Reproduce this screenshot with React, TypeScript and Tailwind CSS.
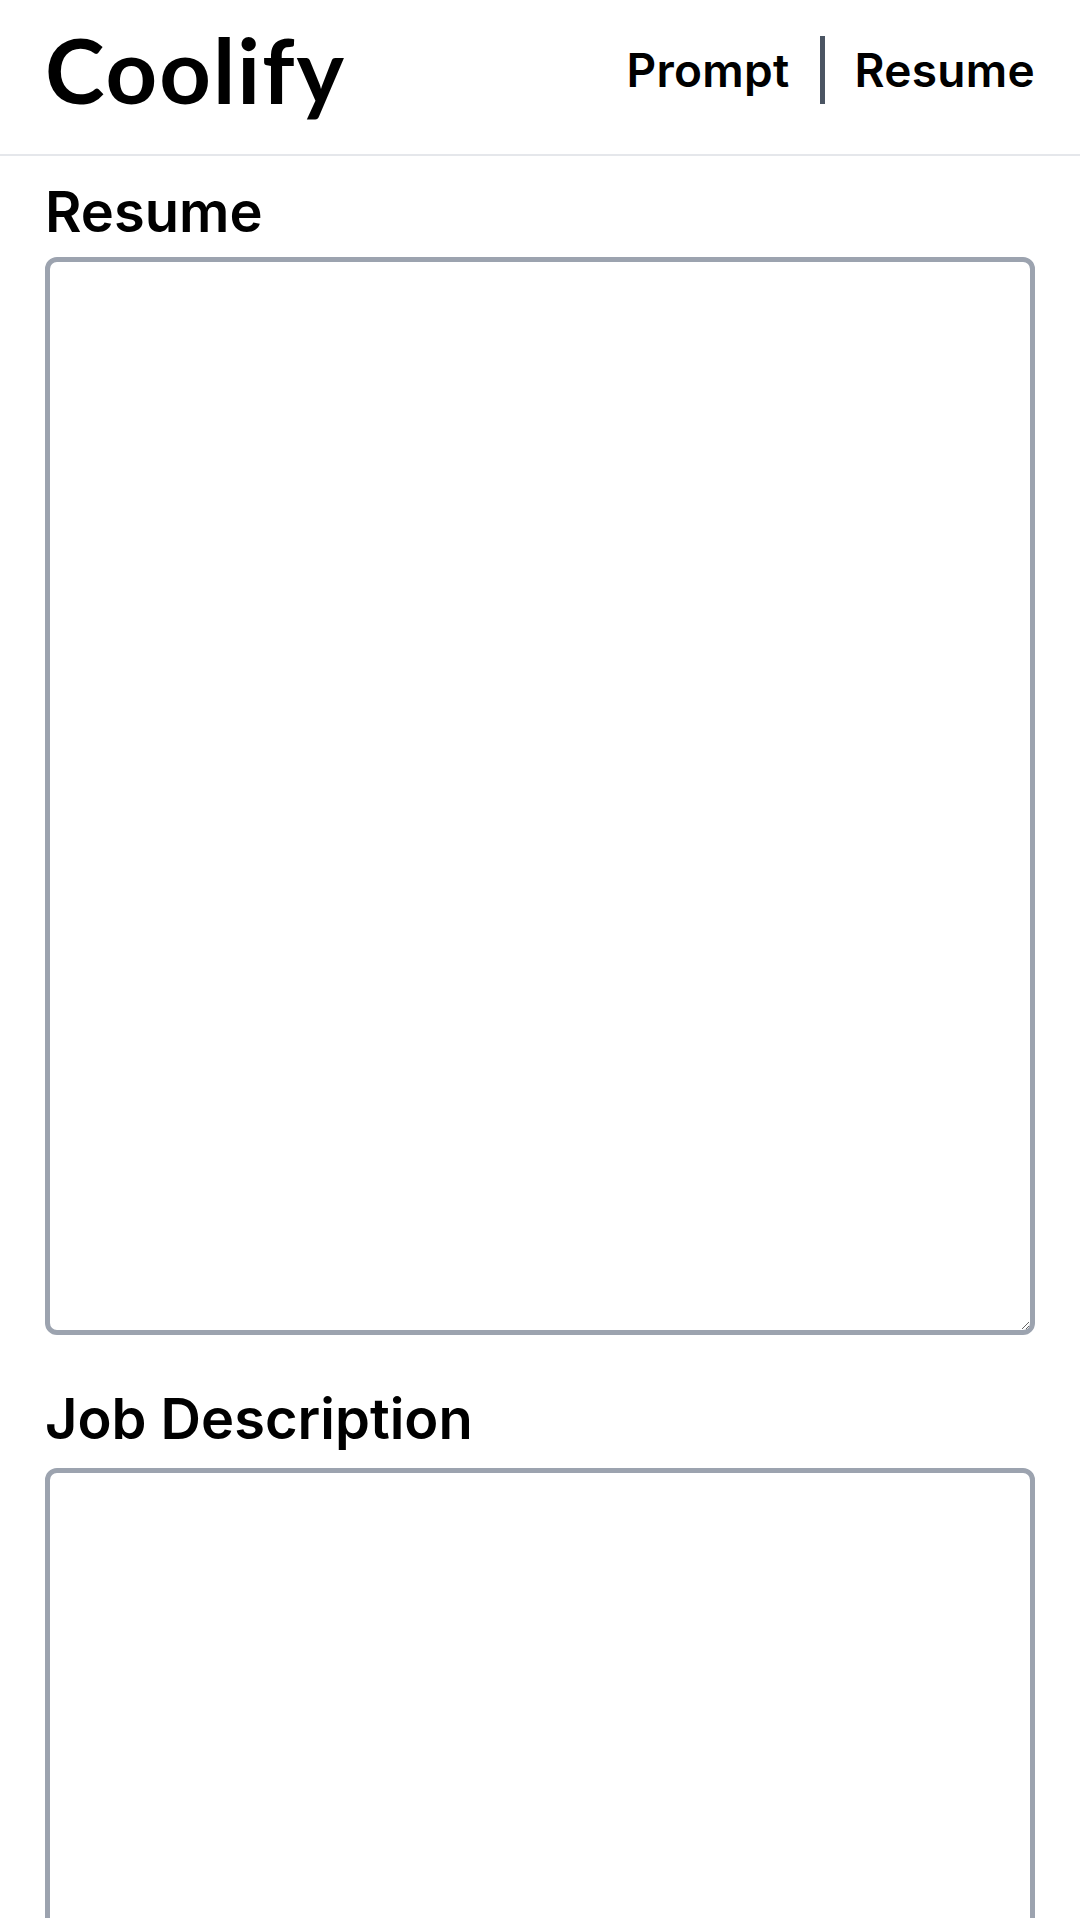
export default function App() {
  return (
    <div className="min-h-screen bg-white text-black font-['Inter',sans-serif]">
      {/* Top bar */}
      <header className="flex h-[156px] items-center justify-between border-b-2 border-[#e5e7eb] px-[45px] pb-[14px]">
        <h1 className="font-['Lato',sans-serif] text-[90px] font-bold leading-none tracking-[2px] -mt-[2px]">
          Coolify
        </h1>
        <nav className="flex items-center gap-[30px] text-[46px] font-semibold leading-none tracking-[0.3px]">
          <a href="#" className="text-black">Prompt</a>
          <span className="h-[68px] w-[5px] bg-[#4b5563]" />
          <a href="#" className="text-black">Resume</a>
        </nav>
      </header>

      <main className="flex flex-col px-[45px]">
        <label htmlFor="resume" className="mt-[24px] mb-[12px] text-[56px] font-semibold leading-[65px]">
          Resume
        </label>
        <textarea
          id="resume"
          className="h-[1078px] w-full rounded-[12px] border-[5px] border-[#9ca3af] bg-white p-4 text-[40px] outline-none"
        />

        <label htmlFor="job" className="mt-[52px] mb-[16px] text-[56px] font-semibold leading-[65px]">
          Job Description
        </label>
        <textarea
          id="job"
          className="h-[1078px] w-full rounded-[12px] border-[5px] border-[#9ca3af] bg-white p-4 text-[40px] outline-none"
        />
      </main>
    </div>
  );
}
